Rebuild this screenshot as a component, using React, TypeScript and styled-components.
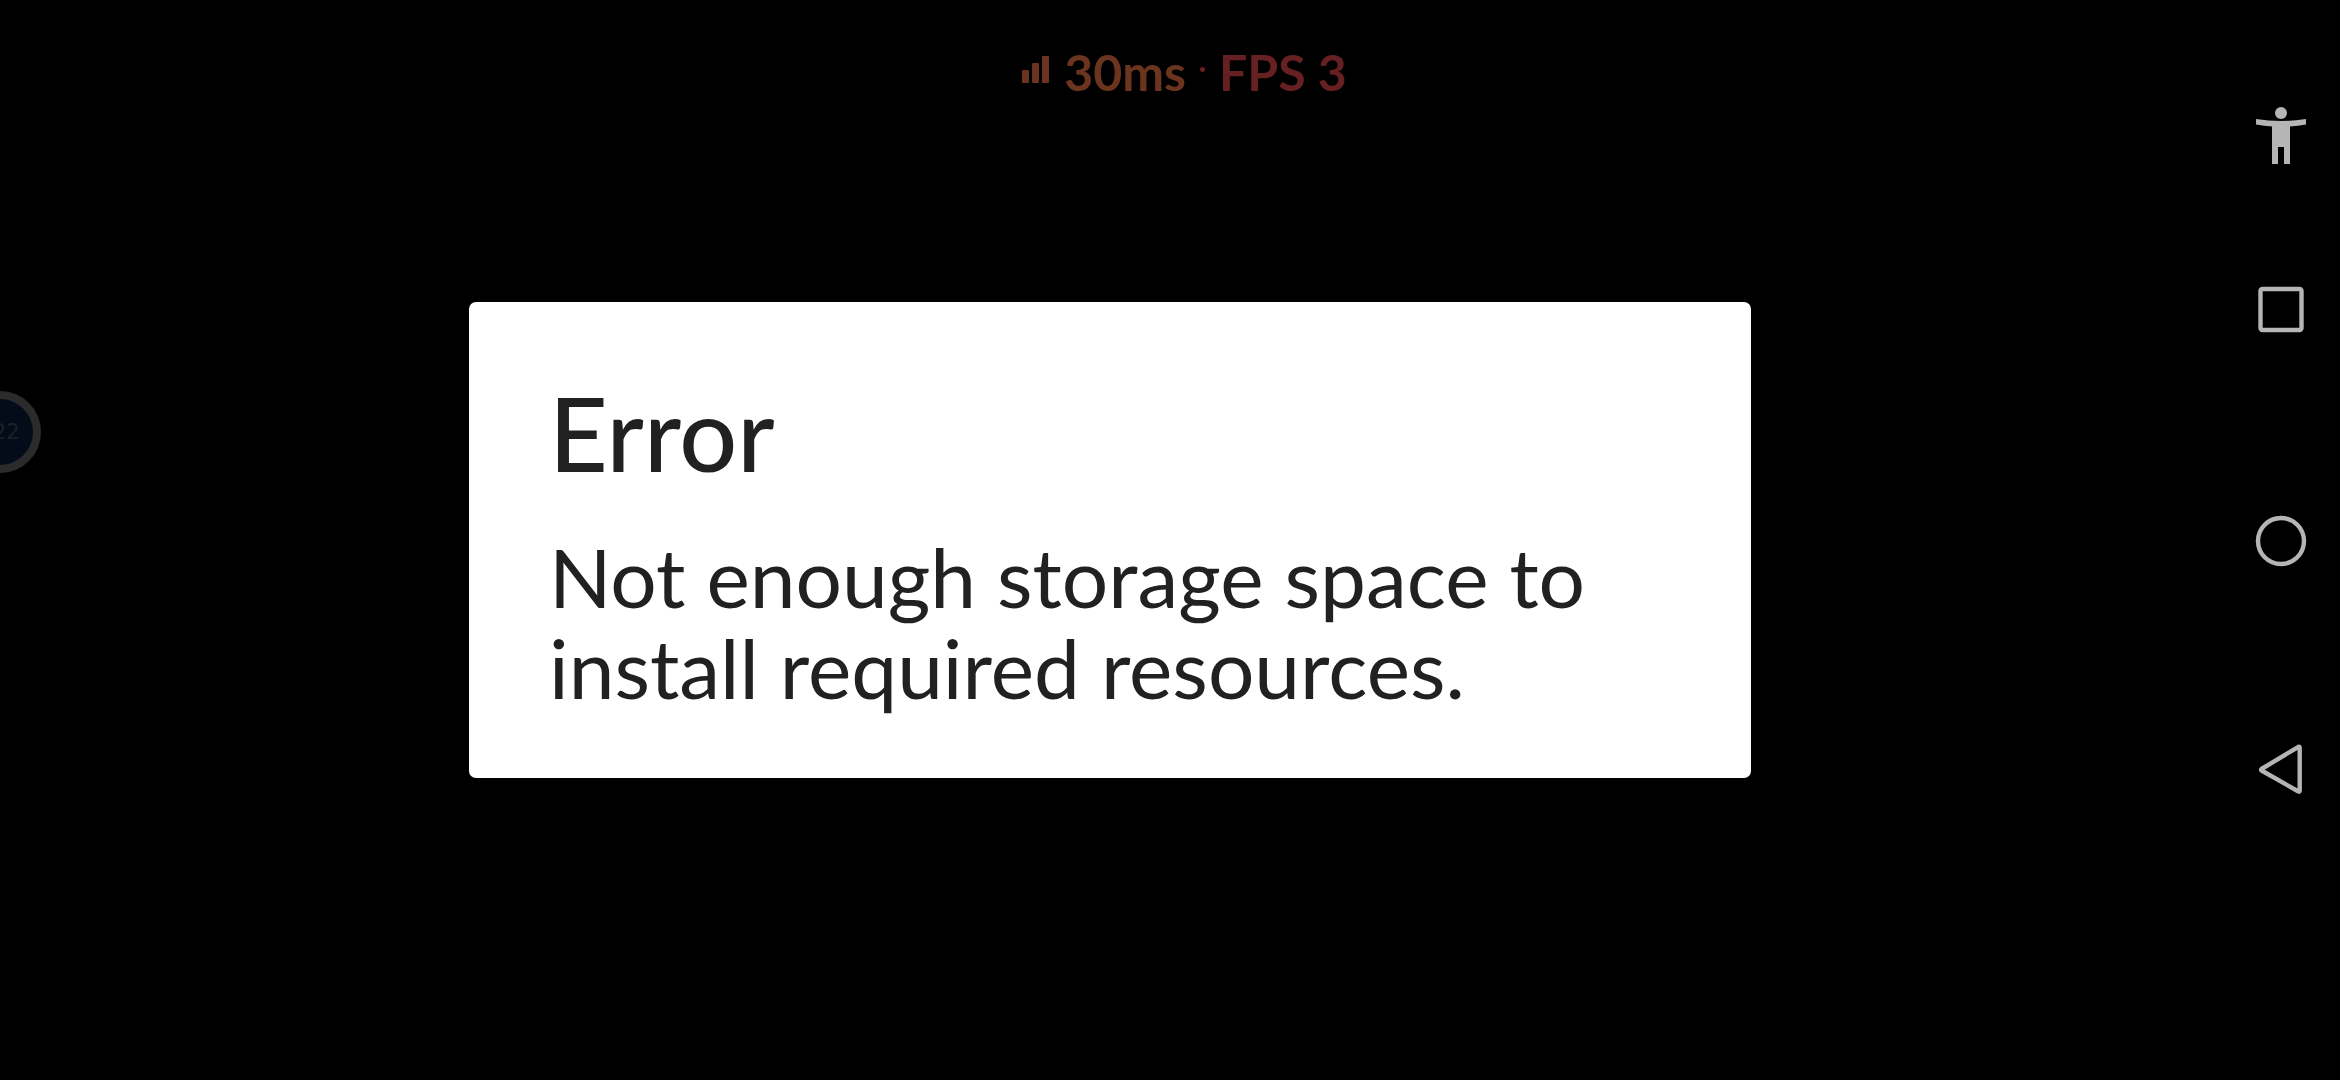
import React from 'react';
import styled, { createGlobalStyle } from 'styled-components';

const Global = createGlobalStyle`
  * { box-sizing: border-box; }
  body { margin: 0; background: #000; font-family: Lato, "Noto Sans", sans-serif; }
`;

const Screen = styled.div`
  position: relative;
  display: flex;
  min-height: 100vh;
  overflow: hidden;
  background: #000;
`;

const Main = styled.main`
  flex: 1;
  display: flex;
  align-items: center;
  justify-content: center;
`;

const Dialog = styled.section`
  width: 57.75%;
  padding: 71px 80px 65px;
  border-radius: 7px;
  background: #fff;
  color: #212121;
`;

const Title = styled.h1`
  margin: 0 0 38px;
  font-size: 102px;
  line-height: 120px;
  font-weight: 500;
`;

const Message = styled.p`
  margin: 0;
  font-size: 82px;
  line-height: 91px;
`;

const Stats = styled.div`
  position: absolute;
  top: 41px;
  left: 0;
  right: 0;
  padding-left: 29px;
  display: flex;
  justify-content: center;
  align-items: center;
  gap: 14px;
  font-size: 50px;
  line-height: 62px;
  font-weight: 700;
`;

const Latency = styled.span`
  display: flex;
  align-items: center;
  gap: 14px;
  color: #6a341f;
`;

const Bars = styled.svg`
  margin-bottom: 4px;
`;

const Dot = styled.span`
  width: 5px;
  height: 5px;
  border-radius: 50%;
  background: #6a2020;
  margin-bottom: 6px;
`;

const Fps = styled.span`
  color: #662022;
`;

const Bubble = styled.button`
  position: absolute;
  left: -41px;
  top: 391px;
  width: 82px;
  height: 82px;
  padding: 0 0 0 26px;
  border: 8px solid #2b2b2b;
  border-radius: 50%;
  background: #040c1a;
  color: #1d2127;
  font: 21px/66px "DejaVu Sans", sans-serif;
  text-align: left;
`;

const NavBar = styled.nav`
  width: 120px;
  display: grid;
  grid-template-rows: 1fr repeat(3, 230px) 1fr;
`;

const NavButton = styled.button<{ $pinned?: boolean }>`
  display: flex;
  align-items: center;
  justify-content: center;
  height: ${p => (p.$pinned ? '118px' : '100%')};
  align-self: end;
  padding: 0;
  border: 0;
  background: none;
  color: #b5b5b5;
`;

const Icon = ({ children }: { children: React.ReactNode }) => (
  <svg width="60" height="60" viewBox="0 0 60 60" fill="none" stroke="currentColor" strokeWidth="4.4" strokeLinejoin="round" aria-hidden="true">
    {children}
  </svg>
);

export default function App() {
  return (
    <Screen>
      <Global />
      <Main>
        <Dialog role="alertdialog" aria-labelledby="title" aria-describedby="message">
          <Title id="title">Error</Title>
          <Message id="message">Not enough storage space to install required resources.</Message>
        </Dialog>
      </Main>
      <NavBar aria-label="System navigation">
        <NavButton $pinned aria-label="Accessibility">
          <Icon>
            <g fill="currentColor" stroke="none">
              <circle cx="31" cy="7" r="6" />
              <path d="M6 13Q31 17 56 13V18.500Q48 20 40 20.500V58H34V41H28V58H22V20.500Q14 20 6 18.500Z" />
            </g>
          </Icon>
        </NavButton>
        <NavButton aria-label="Recent apps">
          <Icon><rect x="10.500" y="9" width="41" height="41" rx="2" /></Icon>
        </NavButton>
        <NavButton aria-label="Home">
          <Icon><circle cx="31" cy="31" r="23" /></Icon>
        </NavButton>
        <NavButton aria-label="Back">
          <Icon><path d="M11.500 29L48.500 6.800Q49.700 6.400 49.700 8V50.500Q49.700 52 48.500 51.500L11.500 30.500Q10.500 29.700 11.500 29Z" /></Icon>
        </NavButton>
      </NavBar>
      <Stats>
        <Latency>
          <Bars width="28" height="28" viewBox="0 0 28 28" fill="currentColor" aria-hidden="true">
            <rect y="14" width="7" height="13" rx="1" />
            <rect x="10" y="7" width="7" height="20" rx="1" />
            <rect x="20" width="7" height="27" rx="1" />
          </Bars>
          30ms
        </Latency>
        <Dot />
        <Fps>FPS 3</Fps>
      </Stats>
      <Bubble>22</Bubble>
    </Screen>
  );
}
